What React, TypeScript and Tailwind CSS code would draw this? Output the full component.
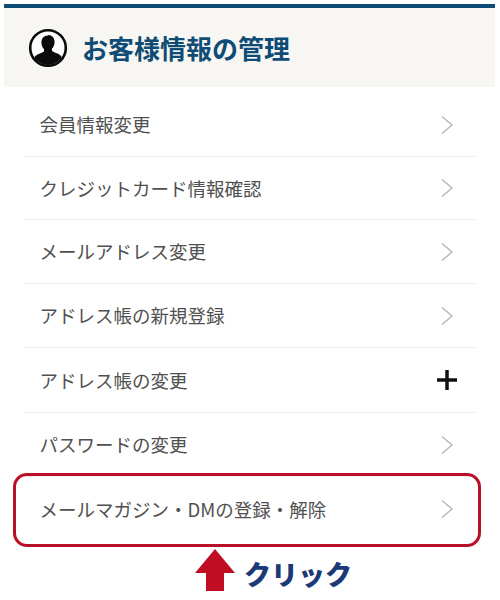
const FONT = "font-['Noto_Sans_CJK_JP','Noto_Sans',sans-serif]";

const rows = [
  { label: '会員情報変更', h: 'h-[70px] pt-[6px]', icon: 'chevron' },
  { label: 'クレジットカード情報確認', h: 'h-[63px]', icon: 'chevron' },
  { label: 'メールアドレス変更', h: 'h-[64px]', icon: 'chevron' },
  { label: 'アドレス帳の新規登録', h: 'h-[64px]', icon: 'chevron' },
  { label: 'アドレス帳の変更', h: 'h-[65px]', icon: 'plus' },
  { label: 'パスワードの変更', h: 'h-[64px]', icon: 'chevron' },
  { label: 'メールマガジン・DMの登録・解除', h: 'h-[64px]', icon: 'chevron', last: true },
];

function Chevron() {
  return (
    <svg width="14" height="20" viewBox="0 0 14 20" fill="none" className="block">
      <path d="M2 1.5 L12 10 L2 18.5" stroke="#b5b5b5" strokeWidth="1.4" />
    </svg>
  );
}

function Plus() {
  return (
    <svg width="22" height="22" viewBox="0 0 22 22" className="block">
      <path d="M11 1 V21 M1 11 H21" stroke="#111" strokeWidth="3.5" />
    </svg>
  );
}

function UserIcon() {
  return (
    <svg width="40" height="40" viewBox="0 0 40 40" className="block">
      <circle cx="20" cy="20" r="17.8" fill="#fff" stroke="#0b0b0b" strokeWidth="2.6" />
      <path
        d="M20 7.500c-4.300 0-6.600 3-6.600 6.900 0 2.800 1.100 5.200 2.600 6.700v2.400c-1.800 1.300-6.200 2.300-8.600 4.400-.7.600-1 1.300-1.200 2.100C9.400 33.500 14.400 37 20 37s10.600-3.500 13.800-7.500c-.2-.8-.5-1.500-1.200-2.100-2.400-2.100-6.800-3.100-8.600-4.400v-2.400c1.500-1.500 2.600-3.900 2.600-6.700 0-3.900-2.300-6.900-6.600-6.900z"
        fill="#0b0b0b"
      />
    </svg>
  );
}

export default function App() {
  return (
    <div className={`relative w-[500px] h-[600px] overflow-hidden bg-white ${FONT}`}>
      <div className="pt-1 pl-1">
        <div className="border-t-[4px] border-[#0f4c75] bg-[#f8f6f3] h-[83px] flex items-center pl-[24px] mr-[5px]">
          <UserIcon />
          <h2 className="ml-[14px] text-[26px] font-bold text-[#0f4c75] leading-none">お客様情報の管理</h2>
        </div>
      </div>

      <ul className="mx-6">
        {rows.map((r) => (
          <li
            key={r.label}
            className={`${r.h} flex items-center justify-between pl-[15.5px] ${r.last ? '' : 'border-b border-[#eeeeee]'} ${r.icon === 'plus' ? 'pr-[18px]' : 'pr-[22px]'}`}
          >
            <span className="text-[18.5px] text-[#505050] leading-none">{r.label}</span>
            {r.icon === 'plus' ? <Plus /> : <Chevron />}
          </li>
        ))}
      </ul>

      <div className="absolute left-[13px] top-[473px] w-[468px] h-[74px] border-[3px] border-[#b90f27] rounded-[14px]" />

      <div className="absolute left-[195px] top-[549px] flex items-center">
        <svg width="40" height="42" viewBox="0 0 40 42" className="block">
          <path d="M20 0 L40 24 H29 V42 H11 V24 H0 Z" fill="#c00d23" />
        </svg>
        <span className="ml-[9px] mt-[7px] text-[27px] font-black text-[#1c3a78] leading-none">クリック</span>
      </div>
    </div>
  );
}
